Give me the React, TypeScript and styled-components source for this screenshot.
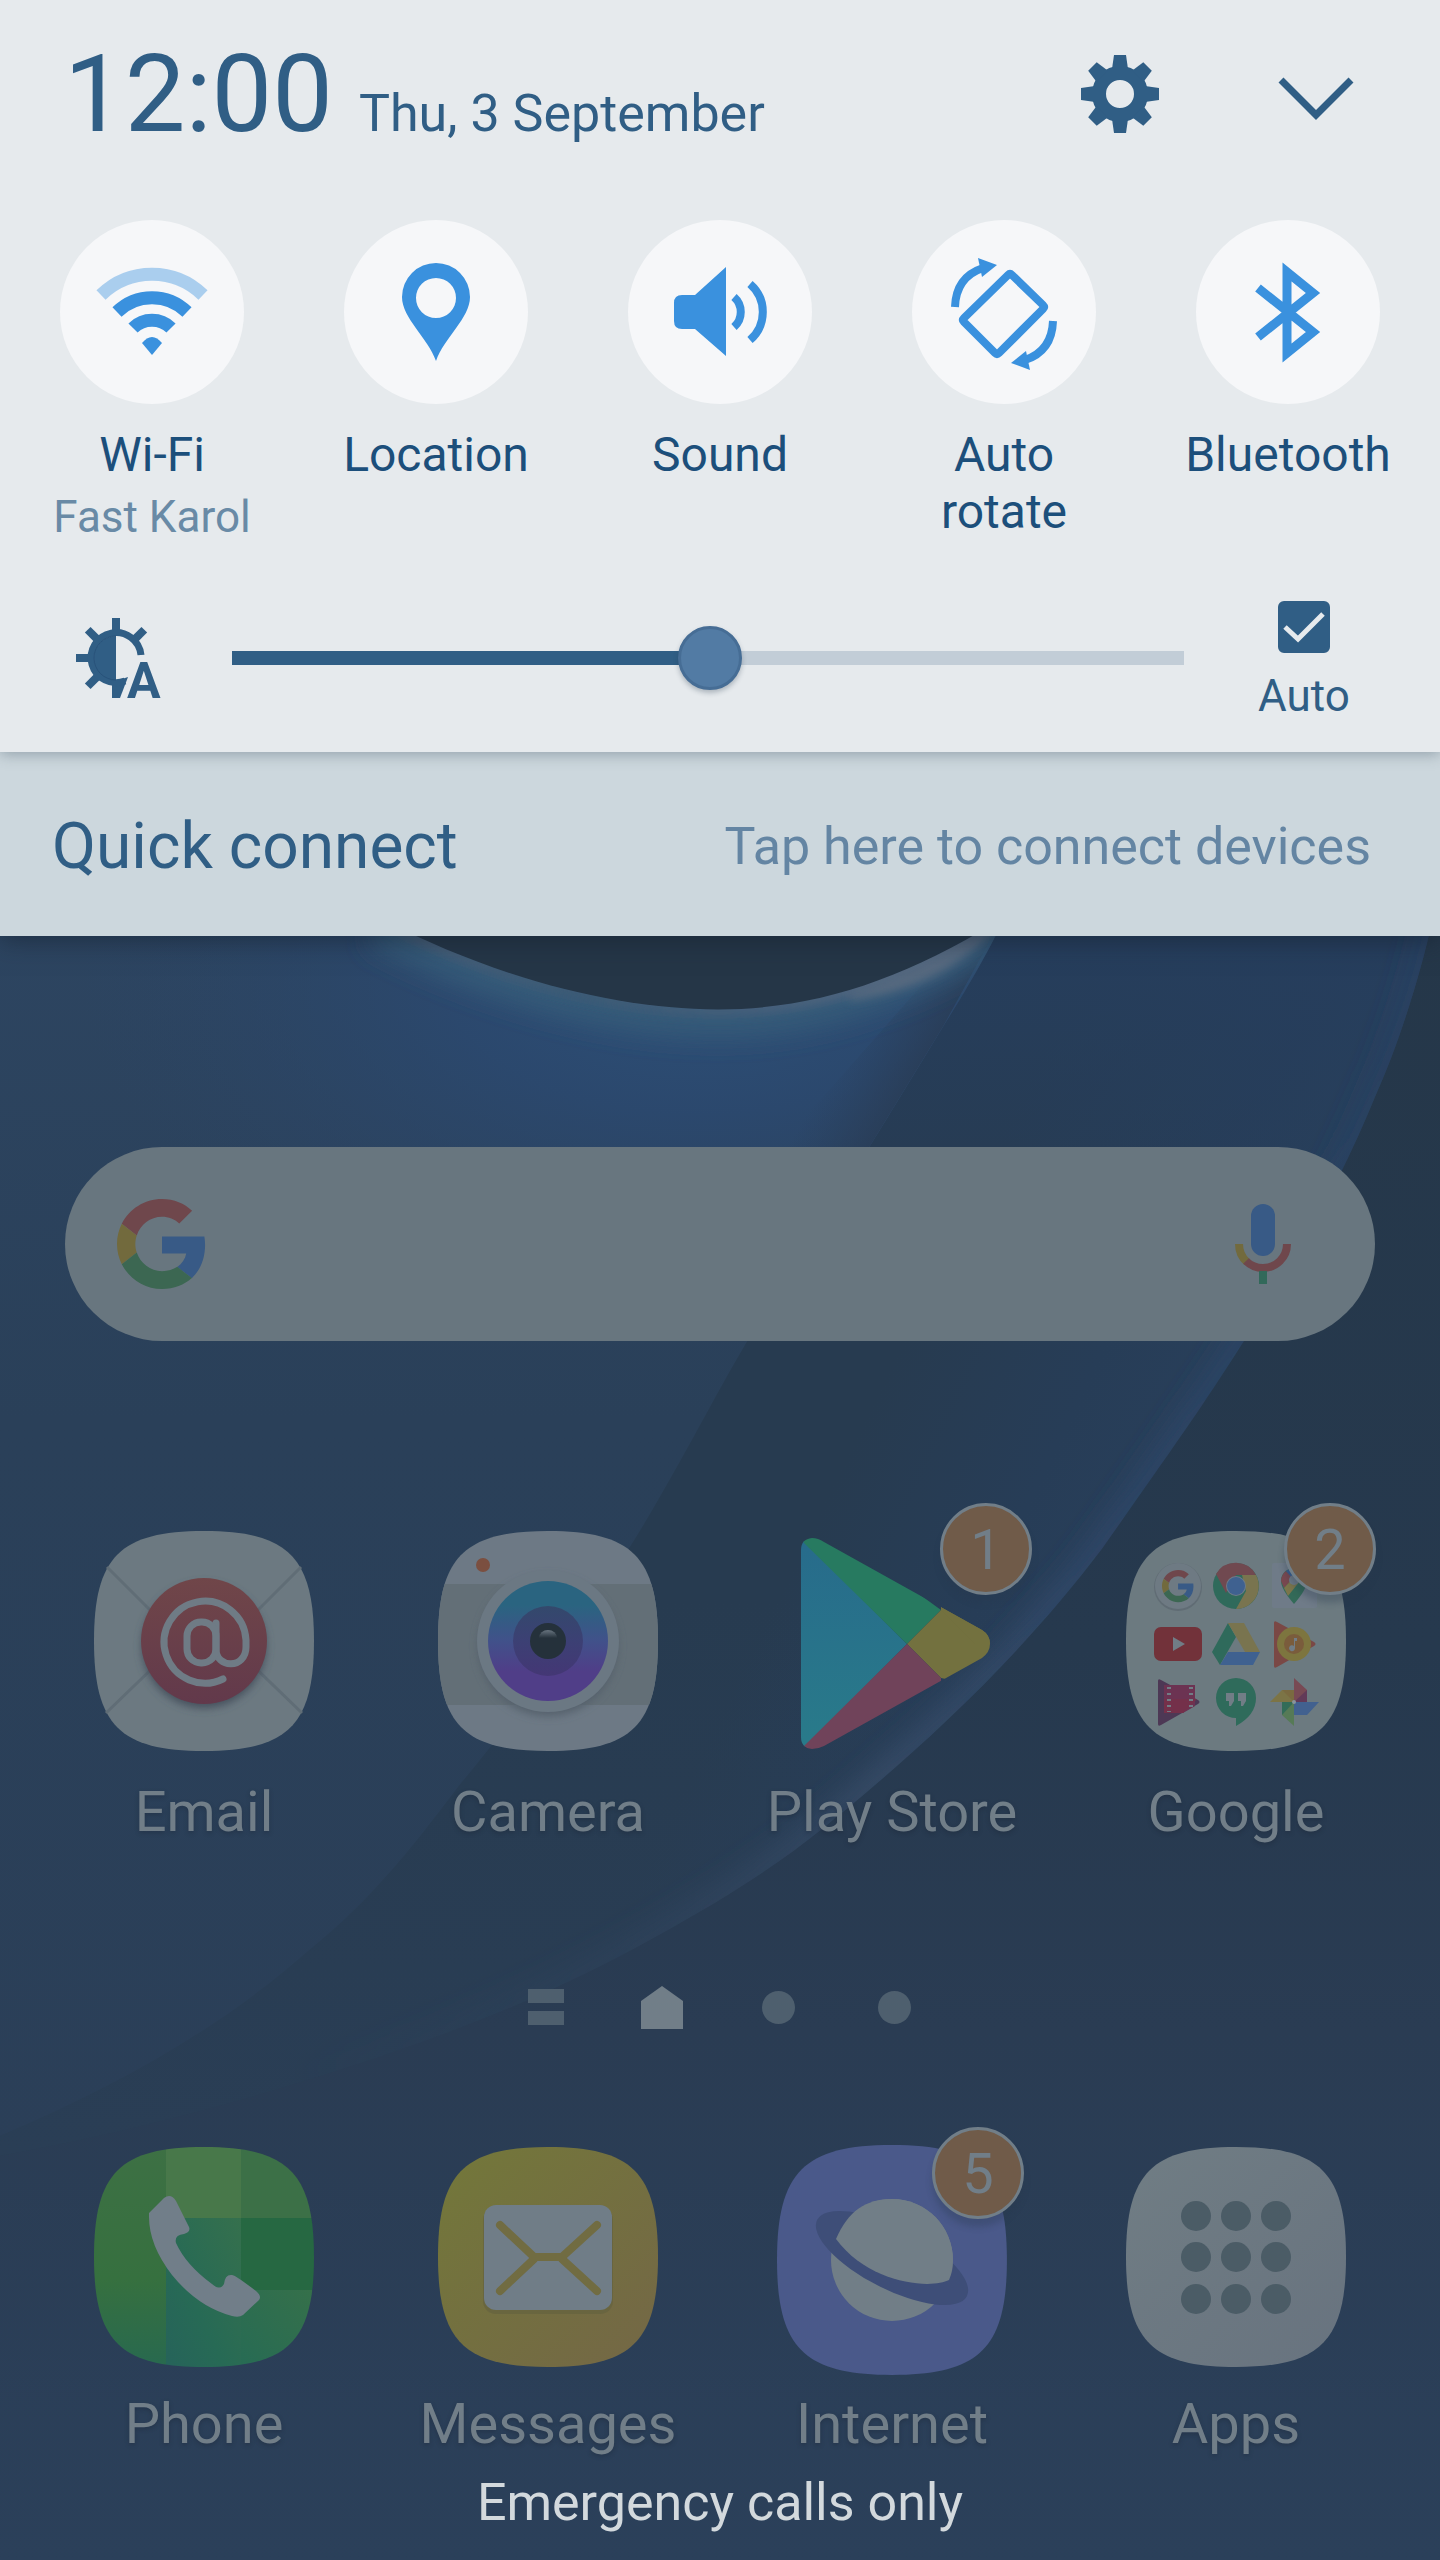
import React, { useState } from "react";
import styled, { createGlobalStyle } from "styled-components";

const color = {
  panel: "#e6eaed",
  strip: "#ccd7dd",
  ink: "#305e85",
  label: "#1c4f7b",
  muted: "#698aa6",
  accent: "#3a91de",
  dimText: "#717e88",
  dimDot: "#4e5f6e",
};

const GlobalStyle = createGlobalStyle`
  *, *::before, *::after { box-sizing: border-box; }
  body {
    margin: 0;
    background: #2b4059;
    font-family: Roboto, "Noto Sans", sans-serif;
  }
  button, input { font: inherit; color: inherit; }
`;

const Screen = styled.div`
  position: relative;
  display: flex;
  flex-direction: column;
  min-height: 100vh;
  overflow: hidden;
`;

const WallpaperArt = styled.svg`
  position: absolute;
  inset: 0;
  width: 100%;
  height: 100%;
`;

const PlainButton = styled.button`
  display: flex;
  align-items: center;
  justify-content: center;
  padding: 0;
  border: 0;
  background: none;
  cursor: pointer;
`;

/* ---------- notification shade ---------- */

const Shade = styled.section`
  position: relative;
  z-index: 1;
  background: ${color.strip};
  color: ${color.ink};
  box-shadow: 0 4px 24px rgba(20, 32, 46, 0.6);
`;

const ShadeTop = styled.div`
  position: relative;
  background: ${color.panel};
  box-shadow: 0 2px 14px rgba(70, 90, 105, 0.45);
`;

const Header = styled.header`
  display: flex;
  align-items: center;
  justify-content: space-between;
  height: 188px;
  padding: 0 64px;
`;

const Clock = styled.div`
  display: flex;
  align-items: baseline;
  gap: 26px;
`;

const Time = styled.time`
  font-size: 108px;
  line-height: 120px;
`;

const DateText = styled.span`
  font-size: 52px;
  line-height: 60px;
`;

const HeaderActions = styled.div`
  display: flex;
  gap: 76px;
`;

const HeaderButton = styled(PlainButton)`
  width: 120px;
  height: 120px;
`;

const Toggles = styled.div`
  display: grid;
  grid-template-columns: repeat(5, 1fr);
  padding: 32px 10px 21px;
`;

const Toggle = styled(PlainButton)`
  flex-direction: column;
  justify-content: flex-start;
`;

const ToggleDisc = styled.span`
  width: 184px;
  height: 184px;
  border-radius: 50%;
  background: #f6f7f9;
  color: ${color.accent};
`;

const ToggleLabel = styled.span`
  max-width: 220px;
  margin-top: 22px;
  color: ${color.label};
  font-size: 48px;
  line-height: 57px;
`;

const ToggleNote = styled.span`
  margin-top: 8px;
  color: ${color.muted};
  font-size: 44px;
  line-height: 52px;
`;

const BrightnessRow = styled.div`
  display: flex;
  align-items: center;
  gap: 72px;
  height: 188px;
  padding: 0 88px 0 76px;
`;

const Slider = styled.input`
  flex: 1;
  min-width: 0;
  height: 64px;
  margin: 0;
  appearance: none;
  background: none;
  &::-webkit-slider-runnable-track {
    height: 14px;
    background: linear-gradient(
      to right,
      ${color.ink} var(--level),
      #c2cdd7 var(--level)
    );
  }
  &::-webkit-slider-thumb {
    appearance: none;
    width: 64px;
    height: 64px;
    margin-top: -25px;
    border: 3px solid #466d95;
    border-radius: 50%;
    background: #527ba4;
    box-shadow: 0 3px 5px rgba(40, 60, 80, 0.3);
  }
`;

const AutoLabel = styled.label`
  display: flex;
  flex-direction: column;
  align-items: center;
  gap: 20px;
  width: 96px;
  padding-top: 4px;
  font-size: 44px;
  line-height: 46px;
`;

const CheckBox = styled.span`
  display: grid;
  width: 52px;
  height: 52px;
  > * {
    grid-area: 1 / 1;
  }
  > svg {
    pointer-events: none;
  }
`;

const CheckInput = styled.input`
  width: 52px;
  height: 52px;
  margin: 0;
  appearance: none;
  border: 5px solid ${color.ink};
  border-radius: 6px;
  &:checked {
    background: ${color.ink};
  }
`;

const QuickConnect = styled.button`
  display: flex;
  align-items: center;
  justify-content: space-between;
  width: 100%;
  height: 184px;
  padding: 6px 69px 0 52px;
  border: 0;
  background: none;
  color: ${color.ink};
  cursor: pointer;
`;

const QuickTitle = styled.span`
  font-size: 64px;
  line-height: 76px;
`;

const QuickHint = styled.span`
  color: #6485a3;
  font-size: 52px;
  line-height: 60px;
`;

/* ---------- home screen ---------- */

const Home = styled.main`
  position: relative;
  display: flex;
  flex-direction: column;
  color: ${color.dimText};
`;

const Search = styled.form`
  display: flex;
  align-items: center;
  height: 194px;
  margin: 211px 65px 0;
  padding: 0 84px 0 52px;
  border-radius: 97px;
  background: #68767f;
`;

const SearchInput = styled.input`
  flex: 1;
  min-width: 0;
  height: 100%;
  padding: 0 32px;
  border: 0;
  outline: 0;
  background: none;
  font-size: 56px;
`;

const AppRow = styled.nav<{ $gap: number; $top: number }>`
  display: grid;
  grid-template-columns: repeat(4, 1fr);
  margin-top: ${(p) => p.$top}px;
  padding: 0 32px;
  > button {
    gap: ${(p) => p.$gap}px;
  }
`;

const AppLauncher = styled(PlainButton)`
  flex-direction: column;
`;

const AppIcon = styled.span`
  position: relative;
  width: 220px;
  height: 220px;
  > svg {
    display: block;
    overflow: visible;
  }
`;

const AppLabel = styled.span`
  font-size: 56px;
  line-height: 66px;
  white-space: nowrap;
  text-shadow: 0 2px 4px rgba(25, 35, 48, 0.35);
`;

const Badge = styled.span<{ $inset: number }>`
  position: absolute;
  top: ${(p) => p.$inset - 28}px;
  right: ${(p) => p.$inset - 30}px;
  width: 92px;
  height: 92px;
  border: 3px solid ${color.dimText};
  border-radius: 50%;
  background: #705b49;
  box-shadow: 0 8px 6px rgba(40, 55, 75, 0.3);
  font-size: 56px;
  line-height: 88px;
  text-align: center;
`;

const Pager = styled.div`
  display: flex;
  justify-content: center;
  margin-top: 140px;
`;

const PageButton = styled(PlainButton)`
  width: 116px;
  height: 44px;
`;

const Carrier = styled.footer`
  margin-top: 16px;
  padding-bottom: 28px;
  color: #d3d9dd;
  font-size: 52px;
  line-height: 60px;
  text-align: center;
`;

/* ---------- drawings ---------- */

const SQUIRCLE =
  "M110 0C194 0 220 26 220 110S194 220 110 220S0 194 0 110S26 0 110 0Z";

function Wallpaper() {
  const outer =
    "M1436 900C1425 960 1400 1040 1377 1091C1345 1170 1300 1255 1244 1340C1200 1410 1160 1465 1102 1548C1010 1670 900 1765 826 1825C770 1870 720 1900 661 1933C560 1990 460 2030 349 2066C230 2105 110 2135 0 2155";
  const inner =
    "M1012 900C996 940 960 1000 943 1026C915 1072 895 1105 869 1147C820 1225 790 1275 747 1341C712 1400 680 1465 634 1540C580 1625 530 1700 459 1785C410 1850 370 1900 312 1947C230 2020 130 2080 0 2135";
  const arc = "M380 918C500 980 620 1009 718 1009C815 1009 900 980 996 922";
  return (
    <WallpaperArt viewBox="0 0 1440 2560" preserveAspectRatio="xMidYMin slice" aria-hidden="true">
      <defs>
        <linearGradient id="wRight" x1="0" y1="900" x2="0" y2="2560" gradientUnits="userSpaceOnUse">
          <stop offset="0" stopColor="#253749" />
          <stop offset="0.45" stopColor="#26394e" />
          <stop offset="0.68" stopColor="#2a3c53" />
          <stop offset="1" stopColor="#2b405a" />
        </linearGradient>
        <linearGradient id="wMid" x1="1000" y1="1140" x2="1330" y2="1300" gradientUnits="userSpaceOnUse">
          <stop offset="0" stopColor="#273b50" />
          <stop offset="0.5" stopColor="#273d57" />
          <stop offset="1" stopColor="#29405c" />
        </linearGradient>
        <linearGradient id="wMidTop" x1="0" y1="930" x2="0" y2="1250" gradientUnits="userSpaceOnUse">
          <stop offset="0" stopColor="#263e5d" />
          <stop offset="1" stopColor="#263e5d" stopOpacity="0" />
        </linearGradient>
        <linearGradient id="wLeft" x1="0" y1="900" x2="0" y2="2200" gradientUnits="userSpaceOnUse">
          <stop offset="0" stopColor="#2d4561" />
          <stop offset="0.4" stopColor="#2a4059" />
          <stop offset="1" stopColor="#2b3f58" />
        </linearGradient>
        <radialGradient id="wGlow" gradientUnits="userSpaceOnUse" gradientTransform="translate(700 980) scale(620 330)" cx="0" cy="0" r="1">
          <stop offset="0" stopColor="#2d5078" />
          <stop offset="0.4" stopColor="#2b4970" stopOpacity="0.85" />
          <stop offset="1" stopColor="#2b4566" stopOpacity="0" />
        </radialGradient>
        <linearGradient id="wShade" x1="850" y1="1040" x2="935" y2="1090" gradientUnits="userSpaceOnUse">
          <stop offset="0" stopColor="#293e5a" stopOpacity="0" />
          <stop offset="0.8" stopColor="#293c55" stopOpacity="0.85" />
        </linearGradient>
        <linearGradient id="wFade" x1="0" y1="1600" x2="0" y2="2150" gradientUnits="userSpaceOnUse">
          <stop offset="0" stopColor="#2b3f57" stopOpacity="0" />
          <stop offset="1" stopColor="#2b3f57" />
        </linearGradient>
        <linearGradient id="wRim" x1="1400" y1="1000" x2="300" y2="2080" gradientUnits="userSpaceOnUse">
          <stop offset="0" stopColor="#28456a" stopOpacity="0.3" />
          <stop offset="0.4" stopColor="#30486a" stopOpacity="0.8" />
          <stop offset="0.6" stopColor="#384d69" />
          <stop offset="0.8" stopColor="#30445d" stopOpacity="0.7" />
          <stop offset="1" stopColor="#2f435c" stopOpacity="0" />
        </linearGradient>
        <linearGradient id="wArc" x1="400" y1="0" x2="985" y2="0" gradientUnits="userSpaceOnUse">
          <stop offset="0" stopColor="#4a5f78" />
          <stop offset="0.3" stopColor="#3d5a75" />
          <stop offset="0.6" stopColor="#465f7a" />
          <stop offset="0.85" stopColor="#566880" />
          <stop offset="1" stopColor="#5a6b82" />
        </linearGradient>
        <filter id="soft12" filterUnits="userSpaceOnUse" x="0" y="800" width="1440" height="1500">
          <feGaussianBlur stdDeviation="12" />
        </filter>
        <filter id="soft5" filterUnits="userSpaceOnUse" x="0" y="800" width="1440" height="1500">
          <feGaussianBlur stdDeviation="5" />
        </filter>
        <clipPath id="midClip"><path d={outer + "V900Z"} /></clipPath>
        <clipPath id="leftClip"><path d={inner + "V900Z"} /></clipPath>
      </defs>
      <rect width="1440" height="2560" fill="url(#wRight)" />
      <g clipPath="url(#midClip)">
        <rect y="900" width="1440" height="1300" fill="url(#wMid)" />
        <rect y="900" width="1440" height="400" fill="url(#wMidTop)" />
        <path d={outer} fill="none" stroke="url(#wRim)" strokeWidth="30" filter="url(#soft12)" />
        <rect y="900" width="1440" height="1300" fill="url(#wFade)" opacity="0.75" />
      </g>
      <g clipPath="url(#leftClip)">
        <rect y="900" width="1100" height="1300" fill="url(#wLeft)" />
        <rect y="900" width="1100" height="600" fill="url(#wGlow)" />
        <path d="M1012 900L943 1026L869 1147L747 1341H560L820 1100L970 930Z" fill="url(#wShade)" />
        <path d={arc} fill="none" stroke="#365a78" strokeWidth="56" filter="url(#soft12)" />
        <path d={arc} fill="none" stroke="url(#wArc)" strokeWidth="12" filter="url(#soft5)" />
        <path d="M850 994Q930 965 985 924L1000 915Q960 985 850 1000Z" fill="#57697f" filter="url(#soft5)" />
      </g>
      <path d={arc + "V900H380Z"} fill="#253647" />
    </WallpaperArt>
  );
}

const GearIcon = () => (
  <svg width="78" height="78" viewBox="-39 -39 78 78" aria-hidden="true">
    <circle r="21" fill="none" stroke={color.ink} strokeWidth="14" />
    {[0, 45, 90, 135, 180, 225, 270, 315].map((a) => (
      <path key={a} d="M-8 -25L-6 -39H6L8 -25Z" fill={color.ink} transform={`rotate(${a})`} />
    ))}
  </svg>
);

const ChevronIcon = () => (
  <svg width="78" height="78" viewBox="0 0 78 78" aria-hidden="true">
    <path d="M4 25L39 60L74 25" fill="none" stroke={color.ink} strokeWidth="7" />
  </svg>
);

const Disc = ({ children }: { children: React.ReactNode }) => (
  <ToggleDisc>
    <svg width="184" height="184" viewBox="0 0 184 184" fill="none" aria-hidden="true">
      {children}
    </svg>
  </ToggleDisc>
);

const WifiIcon = () => (
  <Disc>
    <g stroke="currentColor" strokeWidth="13">
      <path d="M41 75A73 73 0 0 1 143 75" opacity="0.4" />
      <path d="M57 92A50 50 0 0 1 127 92" />
      <path d="M73 108A27 27 0 0 1 111 108" />
    </g>
    <path d="M92 135L82 123Q92 111 102 123Z" fill="currentColor" />
  </Disc>
);

const LocationIcon = () => (
  <Disc>
    <path
      fill="currentColor"
      fillRule="evenodd"
      d="M92 141C84 118 58 98 58 77A34 34 0 0 1 126 77C126 98 100 118 92 141ZM92 58A20 20 0 1 0 92 98A20 20 0 1 0 92 58Z"
    />
  </Disc>
);

const SoundIcon = () => (
  <Disc>
    <path fill="currentColor" d="M54 75H67L98 47V136L67 109H54Q46 109 46 101V83Q46 75 54 75Z" />
    <path stroke="currentColor" strokeWidth="8" d="M106 77A20 20 0 0 1 106 107" />
    <path stroke="currentColor" strokeWidth="8" d="M122 64A37 37 0 0 1 122 120" />
  </Disc>
);

const RotateArrow = () => (
  <>
    <path stroke="currentColor" strokeWidth="8" d="M43 87Q44 57 71 48" />
    <path fill="currentColor" d="M66 38L85 45L70 57Z" />
  </>
);

const RotateIcon = () => (
  <Disc>
    <path stroke="currentColor" strokeWidth="8" strokeLinejoin="round" d="M96 55Q98 53 100 55L131 85Q133 87 131 89L87 133Q85 135 83 133L52 102Q50 100 52 98Z" />
    <RotateArrow />
    <g transform="rotate(180 92 94)">
      <RotateArrow />
    </g>
  </Disc>
);

const BluetoothIcon = () => (
  <Disc>
    <path stroke="currentColor" strokeWidth="9" d="M62 68L117 112L91 133V52L117 73L62 117" />
  </Disc>
);

const BrightnessIcon = () => (
  <svg width="84" height="80" viewBox="0 0 84 80" overflow="visible" aria-hidden="true">
    <g fill={color.ink}>
      {[0, 45, 225, 270, 315].map((a) => (
        <path key={a} d="M36 0H44V14H36Z" transform={`rotate(${a} 40 40)`} />
      ))}
      <path d="M36 66V80H44L52 59L40 63Z" />
    </g>
    <path d="M65 37A25 25 0 1 0 49 63" fill="none" stroke={color.ink} strokeWidth="7" />
    <path d="M40 18A22 22 0 0 0 40 62Z" fill={color.ink} />
    <path d="M40 18A22 22 0 0 0 40 62" fill="none" stroke="#28527a" strokeWidth="1" />
    <text x="51" y="80" fontSize="50" fontWeight="700" fill={color.ink}>
      A
    </text>
  </svg>
);

const GoogleMark = () => (
  <>
    <path fill="#6f474c" d="M24 9.5c3.54 0 6.71 1.22 9.21 3.6l6.85-6.85C35.9 2.38 30.47 0 24 0 14.62 0 6.51 5.38 2.56 13.22l7.98 6.19C12.43 13.72 17.74 9.5 24 9.5z" />
    <path fill="#385a86" d="M46.98 24.55c0-1.57-.15-3.09-.38-4.55H24v9.02h12.94c-.58 2.96-2.26 5.48-4.78 7.18l7.73 6c4.51-4.18 7.09-10.36 7.09-17.65z" />
    <path fill="#726a3d" d="M10.53 28.59c-.48-1.45-.76-2.99-.76-4.59s.27-3.14.76-4.59l-7.98-6.19C.92 16.46 0 20.12 0 24c0 3.88.92 7.54 2.56 10.78l7.97-6.19z" />
    <path fill="#3c6752" d="M24 48c6.48 0 11.93-2.13 15.89-5.81l-7.73-6c-2.15 1.45-4.92 2.3-8.16 2.3-6.26 0-11.57-4.22-13.47-9.91l-7.98 6.19C6.51 42.62 14.62 48 24 48z" />
  </>
);

const MicIcon = () => (
  <svg width="56" height="80" viewBox="0 0 56 80" fill="none" aria-hidden="true">
    <rect x="16" width="24" height="52" rx="12" fill="#385a86" />
    <path d="M4 40Q4 51 12 58" stroke="#726a3d" strokeWidth="8" />
    <path d="M11 57Q18 64 28 64A24 24 0 0 0 52 40" stroke="#6f474c" strokeWidth="8" />
    <path d="M28 67V80" stroke="#32695a" strokeWidth="8" />
  </svg>
);

const Tile = ({ children }: { children: React.ReactNode }) => (
  <svg width="220" height="220" viewBox="0 0 220 220" fill="none" aria-hidden="true">
    {children}
  </svg>
);

const EmailIcon = () => (
  <Tile>
    <defs>
      <linearGradient id="emailRed" x1="0" y1="0" x2="0" y2="1">
        <stop offset="0" stopColor="#704649" />
        <stop offset="1" stopColor="#62394b" />
      </linearGradient>
      <filter id="emailBlur"><feGaussianBlur stdDeviation="4" /></filter>
    </defs>
    <path d={SQUIRCLE} fill="#6c7981" />
    <path d="M13 36L70 93M207 36L150 93M12 182L70 126M208 182L150 126" stroke="#606d76" strokeWidth="3" />
    <circle cx="110" cy="115" r="62" fill="#44505c" filter="url(#emailBlur)" />
    <circle cx="110" cy="110" r="63" fill="url(#emailRed)" />
    <g stroke="#6f7b85" strokeWidth="7" strokeLinecap="round">
      <path d="M129 148A41 41 0 1 1 152 109V116C152 138 122 138 122 118V92" />
      <rect x="93" y="91" width="29" height="41" rx="14" />
    </g>
  </Tile>
);

const CameraIcon = () => (
  <Tile>
    <defs>
      <linearGradient id="lens" x1="0" y1="0" x2="0" y2="1">
        <stop offset="0.2" stopColor="#2a6480" />
        <stop offset="0.5" stopColor="#41518a" />
        <stop offset="0.75" stopColor="#503e88" />
      </linearGradient>
      <linearGradient id="lensMid" x1="0" y1="0" x2="0" y2="1">
        <stop offset="0" stopColor="#33496c" />
        <stop offset="0.5" stopColor="#3c4074" />
        <stop offset="1" stopColor="#443775" />
      </linearGradient>
      <linearGradient id="lensShine" x1="0" y1="0" x2="0" y2="1">
        <stop offset="0" stopColor="#697580" />
        <stop offset="1" stopColor="#25313b" />
      </linearGradient>
      <clipPath id="camClip"><path d={SQUIRCLE} /></clipPath>
      <filter id="camBlur"><feGaussianBlur stdDeviation="4" /></filter>
    </defs>
    <g clipPath="url(#camClip)">
      <rect width="220" height="220" fill="#6d7985" />
      <rect y="53" width="220" height="121" fill="#636f77" />
      <circle cx="110" cy="115" r="70" fill="#54616c" filter="url(#camBlur)" />
    </g>
    <circle cx="45" cy="34" r="7" fill="#7b4f40" />
    <circle cx="110" cy="110" r="71" fill="#6b7883" />
    <circle cx="110" cy="110" r="60" fill="url(#lens)" />
    <circle cx="110" cy="110" r="35" fill="url(#lensMid)" />
    <circle cx="110" cy="110" r="18" fill="#25313b" />
    <path d="M101 107A9 8 0 0 1 119 107Z" fill="url(#lensShine)" />
  </Tile>
);

const PlayStoreIcon = () => (
  <Tile>
    <defs>
      <clipPath id="playClip">
        <path d="M19 19Q19 8 30 7Q36 7 42 11L200 99Q208 104 208 113Q208 121 200 127L42 215Q36 218 30 218Q19 217 19 206Z" />
      </clipPath>
      <linearGradient id="playBlue" x1="0" y1="0" x2="0" y2="1">
        <stop offset="0" stopColor="#276b8b" />
        <stop offset="1" stopColor="#297b8a" />
      </linearGradient>
    </defs>
    <g clipPath="url(#playClip)">
      <path d="M19 7L125 113L19 220Z" fill="url(#playBlue)" />
      <path d="M19 7H60L159 79L125 113L22 12Z" fill="#277a60" />
      <path d="M159 73V79L125 113L159 147L220 160V70Z" fill="#73713f" />
      <path d="M159 60H220V113H193L159 79Z" fill="#73713f" />
      <path d="M125 113L159 147V170L60 220H19L22 215Z" fill="#70435a" />
    </g>
  </Tile>
);

const FolderIcon = () => (
  <Tile>
    <path d={SQUIRCLE} fill="#6c7a80" />
    <circle cx="52" cy="56" r="24" fill="#606c74" />
    <circle cx="52" cy="55" r="23" fill="#6e7a83" />
    <g transform="translate(36 39) scale(.67)">
      <GoogleMark />
    </g>
    <circle cx="110" cy="55" r="23" fill="#2f6a5b" />
    <path d="M90 43A23 23 0 0 1 130 44H110L100 62Z" fill="#704950" />
    <path d="M130 44A23 23 0 0 1 110 78L120 60L116 44Z" fill="#79744f" />
    <circle cx="110" cy="55" r="10" fill="#6e7b88" />
    <circle cx="110" cy="55" r="9" fill="#3f6190" />
    <rect x="146" y="32" width="45" height="45" rx="2" fill="#6f7b88" />
    <path d="M155 50A13 13 0 0 1 181 50Q181 58 168 73Q155 58 155 50Z" fill="#336a58" />
    <path d="M155 50A13 13 0 0 1 160 40L168 47L158 57Z" fill="#784850" />
    <path d="M158 57L170 44L174 50L162 65Z" fill="#7b754b" />
    <path d="M160 40A13 13 0 0 1 174 39L166 47Z" fill="#355c90" />
    <circle cx="168" cy="49" r="5" fill="#6f7b88" />
    <rect x="28" y="96" width="48" height="34" rx="7" fill="#72323a" />
    <path d="M47 106L59 113L47 120Z" fill="#717d86" />
    <path d="M102 92L110 106L94 134L86 121Z" fill="#2f6a5b" />
    <path d="M102 92H118L134 121H119Z" fill="#79744f" />
    <path d="M102 121H134L127 134H94Z" fill="#3f6190" />
    <path d="M148 92Q148 89 151 91L188 111Q191 113 188 115L151 136Q148 138 148 135Z" fill="#7a4845" />
    <circle cx="168" cy="113" r="17" fill="#7d753f" />
    <circle cx="168" cy="113" r="10" fill="#7a5c3c" />
    <path d="M168 107H171V110H169V117A3 3 0 1 1 168 115Z" fill="#717d86" />
    <path d="M32 150Q32 147 35 149L72 169Q75 171 72 173L35 194Q32 196 32 193Z" fill="#4d3855" />
    <path d="M38 154H69V175L57 182H38Z" fill="#6c3352" />
    <path d="M38 168H71L57 182H38Z" fill="#74304a" />
    <path d="M43 156V181M65 156V178" stroke="#717d86" strokeWidth="4" strokeDasharray="2 4" />
    <path d="M110 195V187A20 20 0 1 1 130 167Q130 184 110 195Z" fill="#2f6b5b" />
    <path d="M100 162H108V170L105 175H103V170H100ZM112 162H120V170L117 175H115V170H112Z" fill="#717d86" />
    <path d="M168 147L181 159V171H168Z" fill="#784a54" />
    <path d="M181 159V171H168Z" fill="#623a58" />
    <path d="M144 171L156 159H168V171Z" fill="#7c7446" />
    <path d="M156 159H168V171Z" fill="#7a6a40" />
    <path d="M168 171H193L181 184H168Z" fill="#42618f" />
    <path d="M168 195L156 184V171H168Z" fill="#567a56" />
    <path d="M156 184V171H168Z" fill="#336c58" />
    <circle cx="168" cy="171" r="2" fill="#8a949b" />
  </Tile>
);

const PhoneIcon = () => (
  <Tile>
    <defs>
      <clipPath id="phoneClip"><path d={SQUIRCLE} /></clipPath>
      <linearGradient id="phoneLeft" x1="0" y1="0" x2="0" y2="1">
        <stop offset="0" stopColor="#3d7044" />
        <stop offset="0.6" stopColor="#36703f" />
        <stop offset="1" stopColor="#28694f" />
      </linearGradient>
      <linearGradient id="phoneMid" x1="1" y1="0" x2="0" y2="1">
        <stop offset="0" stopColor="#35704d" />
        <stop offset="0.6" stopColor="#276a55" />
        <stop offset="1" stopColor="#26635a" />
      </linearGradient>
      <linearGradient id="phoneCorner" x1="1" y1="0" x2="0" y2="1">
        <stop offset="0" stopColor="#35704a" />
        <stop offset="1" stopColor="#276b54" />
      </linearGradient>
    </defs>
    <g clipPath="url(#phoneClip)">
      <rect width="72" height="220" fill="url(#phoneLeft)" />
      <rect x="72" width="75" height="71" fill="#48784a" />
      <rect x="72" y="71" width="75" height="149" fill="url(#phoneMid)" />
      <rect x="147" width="73" height="71" fill="#3c7047" />
      <rect x="147" y="71" width="73" height="72" fill="#266842" />
      <rect x="147" y="143" width="73" height="77" fill="url(#phoneCorner)" />
    </g>
    <path
      fill="#717e89"
      d="M55 66L70 51Q77 46 82 54L95 80Q97 85 90 87Q80 88 82 96Q92 118 118 137Q126 144 130 137Q131 127 138 128Q141 128 162 144Q168 149 165 153L149 168Q145 171 138 169Q104 160 78 128Q55 98 55 70Z"
    />
  </Tile>
);

const MessagesIcon = () => (
  <Tile>
    <defs>
      <linearGradient id="msg" x1="0" y1="0" x2="1" y2="1">
        <stop offset="0.1" stopColor="#73763b" />
        <stop offset="1" stopColor="#746746" />
      </linearGradient>
    </defs>
    <path d={SQUIRCLE} fill="url(#msg)" />
    <rect x="45" y="60" width="130" height="107" rx="13" fill="#65633f" opacity="0.7" />
    <rect x="46" y="58" width="128" height="105" rx="12" fill="#707d87" />
    <path d="M62 78L96 110H124L159 78M62 144L96 112M159 144L124 112" stroke="#716c42" strokeWidth="8" strokeLinecap="round" />
  </Tile>
);

const InternetIcon = () => (
  <Tile>
    <path d={SQUIRCLE} fill="#4a598a" transform="translate(-5 -2) scale(1.045)" />
    <circle cx="110" cy="113" r="61" fill="#717e87" />
    <ellipse cx="110" cy="111" rx="84" ry="31" fill="#3e4e78" transform="rotate(27 110 111)" />
    <path d="M54 92C66 64 84 52 110 52C145 52 171 80 171 114Q171 124 167 133C150 142 88 138 54 92Z" fill="#717e87" />
  </Tile>
);

const AppsIcon = () => (
  <Tile>
    <defs>
      <linearGradient id="appsGrey" x1="0" y1="0" x2="1" y2="1">
        <stop offset="0" stopColor="#707d84" />
        <stop offset="1" stopColor="#68737f" />
      </linearGradient>
    </defs>
    <path d={SQUIRCLE} fill="url(#appsGrey)" />
    {[69, 110, 152].map((y) =>
      [70, 110, 150].map((x) => <circle key={`${x}-${y}`} cx={x} cy={y} r="15" fill="#4b5c66" />)
    )}
  </Tile>
);

/* ---------- parts ---------- */

type AppInfo = { name: string; Icon: () => React.JSX.Element; badge?: number; inset?: number };

const homeApps: AppInfo[] = [
  { name: "Email", Icon: EmailIcon },
  { name: "Camera", Icon: CameraIcon },
  { name: "Play Store", Icon: PlayStoreIcon, badge: 1 },
  { name: "Google", Icon: FolderIcon, badge: 2 },
];

const dockApps: AppInfo[] = [
  { name: "Phone", Icon: PhoneIcon },
  { name: "Messages", Icon: MessagesIcon },
  { name: "Internet", Icon: InternetIcon, badge: 5, inset: 8 },
  { name: "Apps", Icon: AppsIcon },
];

const toggles = [
  { label: "Wi-Fi", note: "Fast Karol", Icon: WifiIcon },
  { label: "Location", Icon: LocationIcon },
  { label: "Sound", Icon: SoundIcon },
  { label: "Auto rotate", Icon: RotateIcon },
  { label: "Bluetooth", Icon: BluetoothIcon },
];

const AppButton = ({ name, Icon, badge, inset = 0 }: AppInfo) => (
  <AppLauncher type="button">
    <AppIcon>
      <Icon />
      {badge && <Badge $inset={inset}>{badge}</Badge>}
    </AppIcon>
    <AppLabel>{name}</AppLabel>
  </AppLauncher>
);

const MAX_LEVEL = 255;

function Brightness() {
  const [level, setLevel] = useState(128);
  const percent = (level / MAX_LEVEL) * 100;
  return (
    <BrightnessRow>
      <BrightnessIcon />
      <Slider
        type="range"
        aria-label="Brightness"
        min={0}
        max={MAX_LEVEL}
        value={level}
        onChange={(e) => setLevel(Number(e.target.value))}
        style={{ "--level": `${percent}%` } as React.CSSProperties}
      />
      <AutoLabel htmlFor="auto-brightness">
        <CheckBox>
          <CheckInput id="auto-brightness" type="checkbox" defaultChecked />
          <svg width="52" height="52" viewBox="0 0 52 52" fill="none" aria-hidden="true">
            <path d="M7 26L20 38L45 13" stroke={color.panel} strokeWidth="5" />
          </svg>
        </CheckBox>
        Auto
      </AutoLabel>
    </BrightnessRow>
  );
}

export default function App() {
  return (
    <>
      <GlobalStyle />
      <Screen>
        <Wallpaper />
        <Shade>
          <ShadeTop>
            <Header>
              <Clock>
                <Time>12:00</Time>
                <DateText>Thu, 3 September</DateText>
              </Clock>
              <HeaderActions>
                <HeaderButton type="button" aria-label="Settings">
                  <GearIcon />
                </HeaderButton>
                <HeaderButton type="button" aria-label="Expand">
                  <ChevronIcon />
                </HeaderButton>
              </HeaderActions>
            </Header>
            <Toggles>
              {toggles.map(({ label, note, Icon }) => (
                <Toggle type="button" key={label}>
                  <Icon />
                  <ToggleLabel>{label}</ToggleLabel>
                  {note && <ToggleNote>{note}</ToggleNote>}
                </Toggle>
              ))}
            </Toggles>
            <Brightness />
          </ShadeTop>
          <QuickConnect type="button">
            <QuickTitle>Quick connect</QuickTitle>
            <QuickHint>Tap here to connect devices</QuickHint>
          </QuickConnect>
        </Shade>
        <Home>
          <Search role="search">
            <svg width="90" height="90" viewBox="0 0 48 48" aria-hidden="true">
              <GoogleMark />
            </svg>
            <SearchInput type="text" aria-label="Search" />
            <PlainButton type="button" aria-label="Voice search">
              <MicIcon />
            </PlainButton>
          </Search>
          <AppRow aria-label="Home apps" $top={190} $gap={28}>
            {homeApps.map((a) => (
              <AppButton key={a.name} {...a} />
            ))}
          </AppRow>
          <Pager>
            <PageButton type="button" aria-label="Briefing">
              <svg width="36" height="36" viewBox="0 0 36 36" fill={color.dimDot}>
                <path d="M0 0H36V14H0ZM0 22H36V36H0Z" />
              </svg>
            </PageButton>
            <PageButton type="button" aria-label="Home page">
              <svg width="42" height="43" viewBox="0 0 42 43" fill={color.dimText}>
                <path d="M21 0L42 15V43H0V15Z" />
              </svg>
            </PageButton>
            {["Page 2", "Page 3"].map((p) => (
              <PageButton type="button" aria-label={p} key={p}>
                <svg width="33" height="33" viewBox="0 0 33 33" fill={color.dimDot}>
                  <circle cx="16.5" cy="16.5" r="16.5" />
                </svg>
              </PageButton>
            ))}
          </Pager>
          <AppRow aria-label="Dock" $top={118} $gap={24}>
            {dockApps.map((a) => (
              <AppButton key={a.name} {...a} />
            ))}
          </AppRow>
          <Carrier>Emergency calls only</Carrier>
        </Home>
      </Screen>
    </>
  );
}
